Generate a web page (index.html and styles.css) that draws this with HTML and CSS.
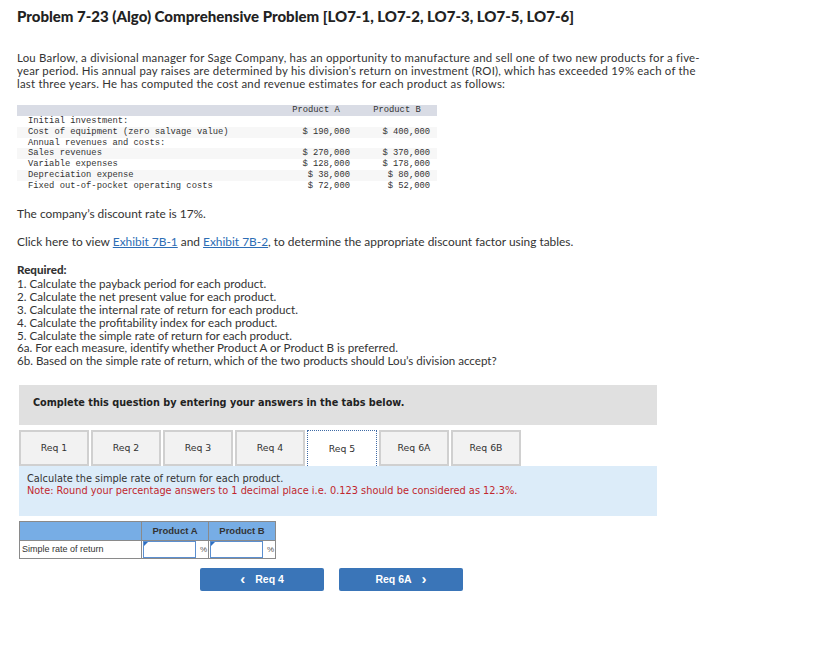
FILE: index.html
```html
<!DOCTYPE html>
<html>
<head>
<meta charset="utf-8">
<link rel="stylesheet" href="styles.css">
</head>
<body>
<div class="page">
  <h1 class="title">Problem 7-23 (Algo) Comprehensive Problem [LO7-1, LO7-2, LO7-3, LO7-5, LO7-6]</h1>
  <p class="intro"><span class="iline">Lou Barlow, a divisional manager for Sage Company, has an opportunity to manufacture and sell one of two new products for a five-</span><span class="iline">year period. His annual pay raises are determined by his division’s return on investment (ROI), which has exceeded 19% each of the</span><span class="iline">last three years. He has computed the cost and revenue estimates for each product as follows:</span></p>

  <table class="data">
    <thead>
      <tr><th class="lbl"></th><th>Product A</th><th>Product B</th></tr>
    </thead>
    <tbody>
      <tr><td class="lbl">Initial investment:</td><td></td><td></td></tr>
      <tr class="alt"><td class="lbl">Cost of equipment (zero salvage value)</td><td class="num">$ 190,000</td><td class="num">$ 400,000</td></tr>
      <tr><td class="lbl">Annual revenues and costs:</td><td></td><td></td></tr>
      <tr class="alt"><td class="lbl">Sales revenues</td><td class="num">$ 270,000</td><td class="num">$ 370,000</td></tr>
      <tr><td class="lbl">Variable expenses</td><td class="num">$ 128,000</td><td class="num">$ 178,000</td></tr>
      <tr class="alt"><td class="lbl">Depreciation expense</td><td class="num">$ 38,000</td><td class="num">$ 80,000</td></tr>
      <tr><td class="lbl">Fixed out-of-pocket operating costs</td><td class="num">$ 72,000</td><td class="num">$ 52,000</td></tr>
    </tbody>
  </table>

  <p class="line rate">The company’s discount rate is 17%.</p>
  <p class="line click">Click here to view <a href="#" class="link">Exhibit 7B-1</a> and <a href="#" class="link">Exhibit 7B-2</a>, to determine the appropriate discount factor using tables.</p>

  <div class="required">
    <div class="req-head">Required:</div>
    <div>1. Calculate the payback period for each product.</div>
    <div>2. Calculate the net present value for each product.</div>
    <div>3. Calculate the internal rate of return for each product.</div>
    <div>4. Calculate the profitability index for each product.</div>
    <div>5. Calculate the simple rate of return for each product.</div>
    <div>6a. For each measure, identify whether Product A or Product B is preferred.</div>
    <div>6b. Based on the simple rate of return, which of the two products should Lou’s division accept?</div>
  </div>

  <div class="question">
    <div class="complete">Complete this question by entering your answers in the tabs below.</div>

    <div class="tabs">
      <div class="tab">Req 1</div>
      <div class="tab">Req 2</div>
      <div class="tab">Req 3</div>
      <div class="tab">Req 4</div>
      <div class="tab active">Req 5</div>
      <div class="tab">Req 6A</div>
      <div class="tab">Req 6B</div>
    </div>

    <div class="panel">
      <div class="panel-text">Calculate the simple rate of return for each product.</div>
      <div class="panel-note">Note: Round your percentage answers to 1 decimal place i.e. 0.123 should be considered as 12.3%.</div>
    </div>

    <table class="answer">
      <tr class="ahead"><th class="alabel"></th><th colspan="2">Product A</th><th colspan="2">Product B</th></tr>
      <tr>
        <td class="alabel">Simple rate of return</td>
        <td class="inp"><div class="box"><span class="flag"></span></div></td><td class="pct">%</td>
        <td class="inp"><div class="box"><span class="flag"></span></div></td><td class="pct">%</td>
      </tr>
    </table>

    <div class="nav">
      <button class="btn"><span class="chev">‹</span>Req 4</button>
      <button class="btn"><span>Req 6A</span><span class="chev r">›</span></button>
    </div>
  </div>
</div>
</body>
</html>
```

FILE: styles.css
```css
html, body { margin: 0; padding: 0; background: #fff; }
body { font-family: "Lato", "Open Sans", sans-serif; color: #333; }
.page { padding: 6px 0 0 17px; width: 800px; }

.title {
  font-family: "Lato", sans-serif;
  font-weight: 900;
  font-size: 15px;
  line-height: 20px;
  margin: 0;
  color: #222;
}

.intro {
  margin: 25px 0 0;
  font-size: 11.4px;
  letter-spacing: 0.22px;
  color: #333;
}
.iline { display: block; height: 13px; line-height: 13px; white-space: nowrap; }

.data {
  margin-top: 15px;
  border-collapse: collapse;
  font-family: "Liberation Mono", monospace;
  font-size: 8.8px;
  color: #333;
  width: 420px;
}
.data th {
  background: #d9dce5;
  font-weight: normal;
  height: 11px;
  line-height: 11px;
  padding: 0;
  text-align: center;
}
.data td { padding: 0; height: 10.8px; line-height: 10.8px; }
.data .lbl { width: 257px; padding-left: 11px; text-align: left; }
.data th:nth-child(2), .data td:nth-child(2) { width: 77px; }
.data th:nth-child(3), .data td:nth-child(3) { width: 75px; }
.data td.num { text-align: right; padding-right: 7px; }
.data tr.alt td { background: #f7f7f7; }

.line { margin: 0; font-size: 11.9px; line-height: 14px; }
.rate { margin-top: 15px; }
.click { margin-top: 14px; }
.link { color: #2d6db5; text-decoration: underline; }

.required { margin-top: 15px; font-size: 11.6px; }
.required div { line-height: 12.8px; height: 12.8px; }
.required .req-head { font-weight: 900; margin-bottom: 2px; }

.question { margin-left: 2px; }

.complete {
  box-sizing: border-box;
  margin-top: 17px;
  width: 638px;
  height: 40px;
  background: #e0e0e0;
  padding: 0 0 5px 14px;
  display: flex;
  align-items: center;
  font-family: "DejaVu Sans", sans-serif;
  font-weight: bold;
  font-size: 9.7px;
  color: #222;
}

.tabs {
  margin-top: 5px;
  display: flex;
  gap: 2px;
  width: 638px;
}
.tab {
  box-sizing: border-box;
  width: 70px;
  height: 36px;
  background: #f2f2f2;
  border: 2px solid #d0d0d0;
  display: flex;
  align-items: center;
  justify-content: center;
  font-family: "DejaVu Sans", sans-serif;
  font-size: 9.3px;
  color: #333;
}
.tab.active {
  background: #fff;
  border: 1px dotted #3f6aa5;
  border-bottom: none;
}

.panel {
  box-sizing: border-box;
  width: 638px;
  height: 50px;
  background: #dcecf9;
  padding: 7px 0 0 8px;
  font-family: "DejaVu Sans", sans-serif;
  font-size: 9.8px;
  line-height: 12px;
}
.panel-text { color: #333; }
.panel-note { color: #c1272d; }

.answer {
  margin: 5px 0 0 0;
  border-collapse: collapse;
  font-family: "Liberation Sans", Arial, sans-serif;
  font-size: 9px;
  color: #333;
}
.answer th, .answer td { border: 1px solid #8a8a8a; padding: 0; }
.ahead th {
  background: #77ade5;
  height: 18px;
  font-weight: bold;
  font-size: 9.5px;
  color: #333;
}
.answer .alabel { width: 119px; text-align: left; padding-left: 2px; }
.answer td { height: 17px; }
.answer td.inp { width: 54px; border-right: none; padding: 0; }
.answer td.pct { width: 11px; border-left: none; font-size: 8px; color: #555; text-align: right; padding-right: 1px; }
.box {
  position: relative;
  box-sizing: border-box;
  width: 53px;
  height: 17px;
  margin-left: 1px;
  border: 1px solid #5b8fd0;
  background: #fff;
}
.flag {
  position: absolute;
  left: 0; top: 0;
  width: 0; height: 0;
  border-top: 4px solid #2e6fc2;
  border-right: 4px solid transparent;
}

.nav {
  margin: 9px 0 0 181px;
  display: flex;
  gap: 15px;
}
.btn {
  width: 124px;
  height: 23px;
  background: #3a75b8;
  color: #fff;
  border: none;
  border-radius: 2px;
  font-family: "Liberation Sans", Arial, sans-serif;
  font-weight: bold;
  font-size: 10.5px;
  display: flex;
  align-items: center;
  justify-content: center;
  padding: 0;
}
.chev { font-size: 15px; font-weight: bold; margin-right: 10px; line-height: 1; position: relative; top: -1px; }
.chev.r { margin-right: 0; margin-left: 10px; }
```
